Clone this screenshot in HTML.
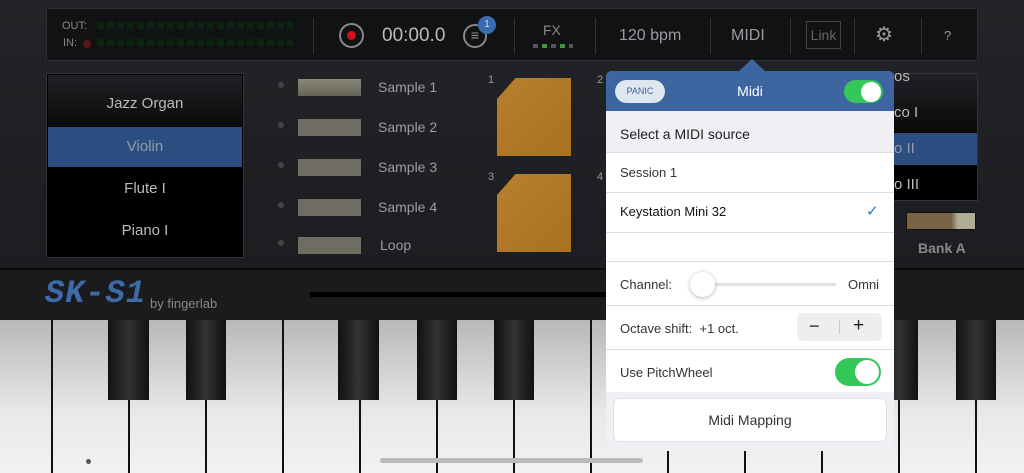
<!DOCTYPE html>
<html><head><meta charset="utf-8"><style>
*{margin:0;padding:0;box-sizing:border-box}
body{width:1024px;height:473px;overflow:hidden;background:#1d1f22;font-family:"Liberation Sans",sans-serif;position:relative}
.a{position:absolute}
.t{color:#9a9ca0;font-size:14px}
</style></head><body>
<div class="a" style="left:0;top:0;width:1024px;height:268px;background:linear-gradient(#222427,#1b1d20)"></div>
<div class="a" style="left:46px;top:8px;width:932px;height:53px;background:#111214;border:1px solid #2c2e31"></div>
<div class="a t" style="left:62px;top:20px;font-size:11px;color:#888">OUT:</div>
<div class="a t" style="left:63px;top:37px;font-size:11px;color:#888">IN:</div>
<div class="a" style="left:83px;top:40px;width:8px;height:8px;border-radius:50%;background:#5a1515"></div>
<div class="a" style="left:97px;top:22px;width:196px;height:7px;background:repeating-linear-gradient(90deg,#0b2410 0 7px,transparent 7px 10px)"></div>
<div class="a" style="left:97px;top:39px;width:196px;height:7px;background:repeating-linear-gradient(90deg,#0b2410 0 7px,transparent 7px 10px)"></div>
<div class="a" style="left:313px;top:18px;width:1px;height:36px;background:#333"></div>
<div class="a" style="left:339px;top:23px;width:25px;height:25px;border-radius:50%;border:2px solid #888"></div>
<div class="a" style="left:347px;top:31px;width:9px;height:9px;border-radius:50%;background:#d0121a"></div>
<div class="a" style="left:382px;top:25px;color:#bbb;font-size:19px">00:00.0</div>
<div class="a" style="left:463px;top:24px;width:24px;height:24px;border-radius:50%;border:2px solid #888;color:#999;font-size:14px;line-height:19px;text-align:center">≡</div>
<div class="a" style="left:478px;top:16px;width:18px;height:18px;border-radius:50%;background:#3a6ab0;color:#cde;font-size:10px;text-align:center;line-height:18px">1</div>
<div class="a" style="left:514px;top:18px;width:1px;height:36px;background:#333"></div>
<div class="a t" style="left:543px;top:22px;color:#888">FX</div>
<div class="a" style="left:533px;top:44px;width:40px;height:4px;background:repeating-linear-gradient(90deg,#555 0 5px,transparent 5px 9px)"></div>
<div class="a" style="left:542px;top:44px;width:5px;height:4px;background:#3a9a3a"></div><div class="a" style="left:560px;top:44px;width:5px;height:4px;background:#3a9a3a"></div>
<div class="a" style="left:595px;top:18px;width:1px;height:36px;background:#333"></div>
<div class="a t" style="left:619px;top:27px;font-size:16px">120 bpm</div>
<div class="a" style="left:710px;top:18px;width:1px;height:36px;background:#333"></div>
<div class="a t" style="left:731px;top:27px;font-size:16px">MIDI</div>
<div class="a" style="left:790px;top:18px;width:1px;height:36px;background:#333"></div>
<div class="a" style="left:806px;top:21px;width:35px;height:28px;border:1px solid #444;color:#666;font-size:14px;text-align:center;line-height:26px">Link</div>
<div class="a" style="left:854px;top:18px;width:1px;height:36px;background:#333"></div>
<div class="a t" style="left:875px;top:22px;font-size:20px;color:#999">⚙</div>
<div class="a" style="left:921px;top:18px;width:1px;height:36px;background:#333"></div>
<div class="a t" style="left:944px;top:28px;font-size:13px">?</div>
<div class="a" style="left:46px;top:73px;width:198px;height:185px;background:#000;border:1px solid #333"></div>
<div class="a" style="left:48px;top:75px;width:194px;height:52px;background:linear-gradient(#1f2124,#0a0a0b)"></div>
<div class="a" style="left:48px;top:127px;width:194px;height:40px;background:#2b4e80"></div>
<div class="a t" style="left:48px;top:95px;width:194px;text-align:center;font-size:15px;color:#bbb">Jazz Organ</div>
<div class="a t" style="left:48px;top:138px;width:194px;text-align:center;font-size:15px;color:#99a">Violin</div>
<div class="a t" style="left:48px;top:180px;width:194px;text-align:center;font-size:15px;color:#bbb">Flute I</div>
<div class="a t" style="left:48px;top:222px;width:194px;text-align:center;font-size:15px;color:#bbb">Piano I</div>
<div class="a" style="left:278px;top:82px;width:6px;height:6px;border-radius:50%;background:#444;box-shadow:0 40px #444,0 80px #444,0 120px #444,0 158px #444"></div>
<div class="a" style="left:298px;top:79px;width:63px;height:17px;background:linear-gradient(#8a877a,#666458);box-shadow:0 40px #6f6d62,0 80px #6f6d62,0 120px #6f6d62,0 158px #6f6d62"></div>
<div class="a t" style="left:378px;top:79px">Sample 1</div>
<div class="a t" style="left:378px;top:119px">Sample 2</div>
<div class="a t" style="left:378px;top:159px">Sample 3</div>
<div class="a t" style="left:378px;top:199px">Sample 4</div>
<div class="a t" style="left:380px;top:237px">Loop</div>
<div class="a t" style="left:488px;top:74px;font-size:11px">1</div><div class="a t" style="left:488px;top:171px;font-size:11px">3</div>
<div class="a t" style="left:597px;top:74px;font-size:11px">2</div><div class="a t" style="left:597px;top:171px;font-size:11px">4</div>
<div class="a" style="left:497px;top:78px;width:74px;height:78px;background:linear-gradient(135deg,#b97f2e,#a8721f);clip-path:polygon(25% 0,100% 0,100% 100%,0 100%,0 27%)"></div>
<div class="a" style="left:497px;top:174px;width:74px;height:78px;background:linear-gradient(135deg,#b97f2e,#a8721f);clip-path:polygon(25% 0,100% 0,100% 100%,0 100%,0 27%)"></div>
<div class="a" style="left:880px;top:73px;width:98px;height:128px;background:#000;border:1px solid #333;overflow:hidden"></div>
<div class="a" style="left:881px;top:74px;width:96px;height:58px;background:linear-gradient(#1f2124,#0a0a0b)"></div>
<div class="a" style="left:881px;top:133px;width:96px;height:32px;background:#2b4e80"></div>
<div class="a t" style="left:894px;top:68px;font-size:15px;color:#bbb;height:14px;overflow:hidden;padding-top:0">os</div>
<div class="a t" style="left:894px;top:104px;font-size:15px;color:#bbb">co I</div>
<div class="a t" style="left:894px;top:140px;font-size:15px;color:#99a">o II</div>
<div class="a t" style="left:894px;top:176px;font-size:15px;color:#bbb">o III</div>
<div class="a" style="left:906px;top:212px;width:70px;height:18px;background:linear-gradient(90deg,#7a6345 0 65%,#b0ad96 75%);border:1px solid #111"></div>
<div class="a t" style="left:918px;top:240px;font-size:14px;color:#888;font-weight:bold">Bank A</div>
<div class="a" style="left:0;top:268px;width:1024px;height:52px;background:#1a1b1d;border-top:2px solid #0c0c0d"></div>
<div class="a" style="left:45px;top:275px;font-size:32px;font-weight:bold;font-style:italic;color:#3f6aa8;letter-spacing:1px;font-family:'Liberation Mono',monospace">SK-S1</div>
<div class="a t" style="left:150px;top:296px;font-size:13px;color:#888">by fingerlab</div>
<div class="a" style="left:310px;top:292px;width:580px;height:5px;background:#000"></div>
<div class="a" style="left:0;top:320px;width:1024px;height:153px;background:linear-gradient(#b8b8b8,#e8e8e8 60%,#f2f2f2);"></div>
<div class="a" style="left:0;top:320px;width:1024px;height:153px;background:repeating-linear-gradient(90deg,transparent 0 50px,#111 50px 52px,transparent 52px 77px);background-position:1px 0"></div>
<div class="a" style="left:0;top:320px;width:1024px;height:153px">
<div class="a" style="left:108px;top:0;width:41px;height:80px;background:linear-gradient(90deg,#111,#333 50%,#111)"></div>
<div class="a" style="left:186px;top:0;width:40px;height:80px;background:linear-gradient(90deg,#111,#333 50%,#111)"></div>
<div class="a" style="left:338px;top:0;width:41px;height:80px;background:linear-gradient(90deg,#111,#333 50%,#111)"></div>
<div class="a" style="left:417px;top:0;width:40px;height:80px;background:linear-gradient(90deg,#111,#333 50%,#111)"></div>
<div class="a" style="left:494px;top:0;width:40px;height:80px;background:linear-gradient(90deg,#111,#333 50%,#111)"></div>
<div class="a" style="left:880px;top:0;width:38px;height:80px;background:linear-gradient(90deg,#111,#333 50%,#111)"></div>
<div class="a" style="left:956px;top:0;width:40px;height:80px;background:linear-gradient(90deg,#111,#333 50%,#111)"></div>
</div>
<div class="a" style="left:86px;top:459px;width:5px;height:5px;border-radius:50%;background:#555"></div>
<div class="a" style="left:380px;top:458px;width:263px;height:5px;border-radius:3px;background:#bbb"></div>
<div class="a" style="left:738px;top:59px;width:0;height:0;border-left:14px solid transparent;border-right:14px solid transparent;border-bottom:13px solid #3d65a0"></div>
<div class="a" style="left:606px;top:71px;width:288px;height:380px;background:#efeff4;border-radius:6px;overflow:hidden;font-family:'Liberation Sans',sans-serif">
 <div class="a" style="left:0;top:0;width:288px;height:40px;background:#3d65a0"></div>
 <div class="a" style="left:9px;top:9px;width:50px;height:23px;border-radius:12px;background:#dfe6f0;color:#3d65a0;font-size:9px;text-align:center;line-height:23px">PANIC</div>
 <div class="a" style="left:0;top:12px;width:288px;text-align:center;color:#fff;font-size:14px">Midi</div>
 <div class="a" style="left:238px;top:9px;width:39px;height:23px;border-radius:12px;background:#34c759"></div>
 <div class="a" style="left:255px;top:11px;width:20px;height:20px;border-radius:50%;background:#fff"></div>
 <div class="a" style="left:14px;top:55px;font-size:14px;color:#222">Select a MIDI source</div>
 <div class="a" style="left:0;top:81px;width:288px;height:240px;background:#fff"></div>
 <div class="a" style="left:0;top:121px;width:288px;height:1px;background:#ddd"></div>
 <div class="a" style="left:0;top:81px;width:288px;height:1px;background:#ddd"></div>
 <div class="a" style="left:0;top:161px;width:288px;height:1px;background:#ddd"></div>
 <div class="a" style="left:0;top:190px;width:288px;height:1px;background:#ddd"></div>
 <div class="a" style="left:0;top:234px;width:288px;height:1px;background:#ddd"></div>
 <div class="a" style="left:0;top:278px;width:288px;height:1px;background:#ddd"></div>
 <div class="a" style="left:14px;top:94px;font-size:13px;color:#333">Session 1</div>
 <div class="a" style="left:14px;top:133px;font-size:13px;color:#111">Keystation Mini 32</div>
 <div class="a" style="left:260px;top:131px;font-size:15px;color:#1a7ae8">✓</div>
 <div class="a" style="left:14px;top:206px;font-size:13px;color:#333">Channel:</div>
 <div class="a" style="left:90px;top:212px;width:140px;height:3px;background:#e2e2e6;border-radius:2px"></div>
 <div class="a" style="left:84px;top:201px;width:25px;height:25px;border-radius:50%;background:#fff;box-shadow:0 1px 4px rgba(0,0,0,.3)"></div>
 <div class="a" style="left:242px;top:206px;font-size:13px;color:#333">Omni</div>
 <div class="a" style="left:14px;top:250px;font-size:13px;color:#333">Octave shift: &nbsp;+1 oct.</div>
 <div class="a" style="left:191px;top:242px;width:85px;height:28px;border-radius:6px;background:#eeeef1"></div>
 <div class="a" style="left:233px;top:249px;width:1px;height:14px;background:#ccc"></div>
 <div class="a" style="left:203px;top:245px;font-size:18px;color:#222">−</div>
 <div class="a" style="left:247px;top:244px;font-size:19px;color:#222">+</div>
 <div class="a" style="left:14px;top:294px;font-size:13px;color:#333">Use PitchWheel</div>
 <div class="a" style="left:229px;top:287px;width:46px;height:28px;border-radius:14px;background:#34c759"></div>
 <div class="a" style="left:249px;top:289px;width:24px;height:24px;border-radius:50%;background:#fff"></div>
 <div class="a" style="left:7px;top:327px;width:274px;height:44px;border-radius:6px;background:#fff;border:1px solid #e0e0e4"></div>
 <div class="a" style="left:7px;top:341px;width:274px;text-align:center;font-size:14px;color:#333">Midi Mapping</div>
</div>
</body></html>
